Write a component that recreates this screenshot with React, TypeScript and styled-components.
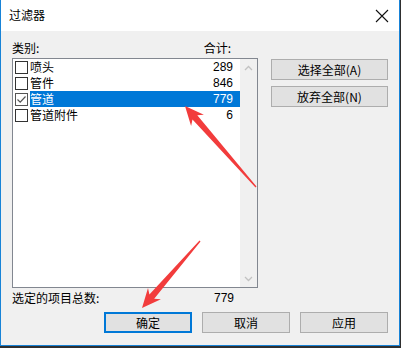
import React from "react";
import styled, { createGlobalStyle } from "styled-components";

type Item = { name: string; count: number; checked: boolean; selected: boolean };

const items: Item[] = [
  { name: "喷头", count: 289, checked: false, selected: false },
  { name: "管件", count: 846, checked: false, selected: false },
  { name: "管道", count: 779, checked: true, selected: true },
  { name: "管道附件", count: 6, checked: false, selected: false },
];

type Pt = [number, number];

// tapered annotation arrow, tip -> tail
const arrowPoints = (tip: Pt, tail: Pt) => {
  const dx = tail[0] - tip[0];
  const dy = tail[1] - tip[1];
  const len = Math.hypot(dx, dy);
  const d: Pt = [dx / len, dy / len];
  const n: Pt = [-d[1], d[0]];
  const at = (k: number, w: number): Pt => [
    tip[0] + d[0] * k + n[0] * w,
    tip[1] + d[1] * k + n[1] * w,
  ];
  const pts: Pt[] = [
    tip,
    at(19, 8.5),
    at(15, 3.2),
    at(len, 0.6),
    at(len, -0.6),
    at(15, -3.2),
    at(19, -8.5),
  ];
  return pts.map((p) => p.map((v) => v.toFixed(1)).join(",")).join(" ");
};

export default function App() {
  return (
    <>
      <GlobalStyle />
      <Window>
        <TitleBar>
          <Title>过滤器</Title>
          <svg width="14" height="14" viewBox="0 0 14 14">
            <path d="M1 1 L13 13 M13 1 L1 13" stroke="#111" strokeWidth="1.1" />
          </svg>
        </TitleBar>
        <Body>
          <Main>
            <LeftCol>
              <HeaderRow>
                <span>类别:</span>
                <TotalLabel>合计:</TotalLabel>
              </HeaderRow>
              <ListBox>
                <Rows>
                  {items.map((it) => (
                    <Row key={it.name}>
                      <Check $dim={it.selected}>
                        {it.checked && (
                          <svg width="11" height="11" viewBox="0 0 11 11">
                            <path d="M1.5 5.5 L4.2 8.2 L9.5 2.5" stroke="#555" strokeWidth="1.2" fill="none" />
                          </svg>
                        )}
                      </Check>
                      <Cell $selected={it.selected}>
                        <span>{it.name}</span>
                        <Num>{it.count}</Num>
                      </Cell>
                    </Row>
                  ))}
                </Rows>
                <ScrollBar>
                  <svg width="9" height="6" viewBox="0 0 9 6">
                    <path d="M1 5 L4.5 1.5 L8 5" stroke="#c2c2c2" strokeWidth="1.3" fill="none" />
                  </svg>
                  <svg width="9" height="6" viewBox="0 0 9 6">
                    <path d="M1 1 L4.5 4.5 L8 1" stroke="#c2c2c2" strokeWidth="1.3" fill="none" />
                  </svg>
                </ScrollBar>
              </ListBox>
              <TotalsRow>
                <span>选定的项目总数:</span>
                <Num>779</Num>
              </TotalsRow>
            </LeftCol>
            <RightCol>
              <SideButton>选择全部(A)</SideButton>
              <SideButton>放弃全部(N)</SideButton>
            </RightCol>
          </Main>
          <Footer>
            <DlgButton $focused>确定</DlgButton>
            <DlgButton>取消</DlgButton>
            <DlgButton>应用</DlgButton>
          </Footer>
        </Body>
        <Overlay width="401" height="348" viewBox="0 0 401 348">
          <polygon points={arrowPoints([185, 106], [256, 187])} fill="#f23c3c" />
          <polygon points={arrowPoints([142, 308], [200, 241])} fill="#f23c3c" />
        </Overlay>
      </Window>
    </>
  );
}

const GlobalStyle = createGlobalStyle`
  html, body {
    margin: 0;
    padding: 0;
    background: #2f2f2f;
  }
  body {
    font-family: "Noto Sans CJK SC", "Liberation Sans", sans-serif;
    font-size: 12px;
    color: #000;
  }
`;

const Window = styled.div`
  position: relative;
  width: 400px;
  height: 346px;
  box-sizing: border-box;
  border: 1px solid #1883d7;
  border-top: none;
  background: #f0f0f0;
  display: flex;
  flex-direction: column;
`;

const TitleBar = styled.div`
  height: 31px;
  background: #fff;
  display: flex;
  align-items: center;
  justify-content: space-between;
  padding: 0 10px 0 8px;
  flex-shrink: 0;
`;

const Title = styled.div`
  font-size: 12px;
  line-height: 14px;
  padding-bottom: 2px;
`;

const Body = styled.div`
  display: flex;
  flex-direction: column;
  padding: 9px 11px 0 11px;
`;

const Main = styled.div`
  display: flex;
`;

const LeftCol = styled.div`
  width: 246px;
  display: flex;
  flex-direction: column;
`;

const HeaderRow = styled.div`
  height: 18px;
  display: flex;
  align-items: center;
  line-height: 14px;
  padding-bottom: 2px;
  box-sizing: border-box;
`;

const TotalLabel = styled.span`
  margin-left: auto;
  margin-right: 27px;
`;

const ListBox = styled.div`
  height: 230px;
  box-sizing: border-box;
  border: 1px solid #828790;
  background: #fff;
  display: flex;
`;

const Rows = styled.div`
  flex: 1;
  display: flex;
  flex-direction: column;
`;

const Row = styled.div`
  height: 16px;
  display: flex;
  align-items: center;
`;

const Check = styled.div<{ $dim?: boolean }>`
  width: 13px;
  height: 13px;
  box-sizing: border-box;
  margin: 0 2px 0 2px;
  border: 1px solid ${(p) => (p.$dim ? "#555" : "#333")};
  background: #fff;
  display: flex;
  align-items: center;
  justify-content: center;
`;

const Cell = styled.div<{ $selected?: boolean }>`
  flex: 1;
  height: 16px;
  display: flex;
  align-items: center;
  justify-content: space-between;
  padding: 0 7px 0 0;
  line-height: 14px;
  background: ${(p) => (p.$selected ? "#0078d7" : "transparent")};
  color: ${(p) => (p.$selected ? "#fff" : "#000")};
`;

const Num = styled.span`
  font-family: "Liberation Sans", sans-serif;
  font-size: 12px;
`;

const ScrollBar = styled.div`
  width: 17px;
  background: #f0f0f0;
  display: flex;
  flex-direction: column;
  justify-content: space-between;
  align-items: center;
  padding: 6px 0 5px;
  box-sizing: border-box;
`;

const TotalsRow = styled.div`
  height: 19px;
  display: flex;
  align-items: center;
  justify-content: space-between;
  padding: 0 24px 0 0;
  line-height: 14px;
`;

const RightCol = styled.div`
  margin-left: 13px;
  width: 117px;
  padding-top: 19px;
  display: flex;
  flex-direction: column;
  gap: 6px;
`;

const ButtonBase = styled.button`
  height: 21px;
  box-sizing: border-box;
  background: #e1e1e1;
  border: 1px solid #adadad;
  font-family: "Noto Sans CJK SC", "Liberation Sans", sans-serif;
  font-size: 12px;
  line-height: 14px;
  color: #000;
  padding: 0;
  display: flex;
  align-items: center;
  justify-content: center;
`;

const SideButton = styled(ButtonBase)`
  width: 117px;
`;

const Footer = styled.div`
  display: flex;
  justify-content: flex-end;
  gap: 10px;
  margin-top: 5px;
`;

const DlgButton = styled(ButtonBase)<{ $focused?: boolean }>`
  width: 88px;
  border-color: ${(p) => (p.$focused ? "#0078d7" : "#adadad")};
  box-shadow: ${(p) => (p.$focused ? "inset 0 0 0 1px #0078d7" : "none")};
`;

const Overlay = styled.svg`
  position: absolute;
  top: 0;
  left: -1px;
  pointer-events: none;
`;
